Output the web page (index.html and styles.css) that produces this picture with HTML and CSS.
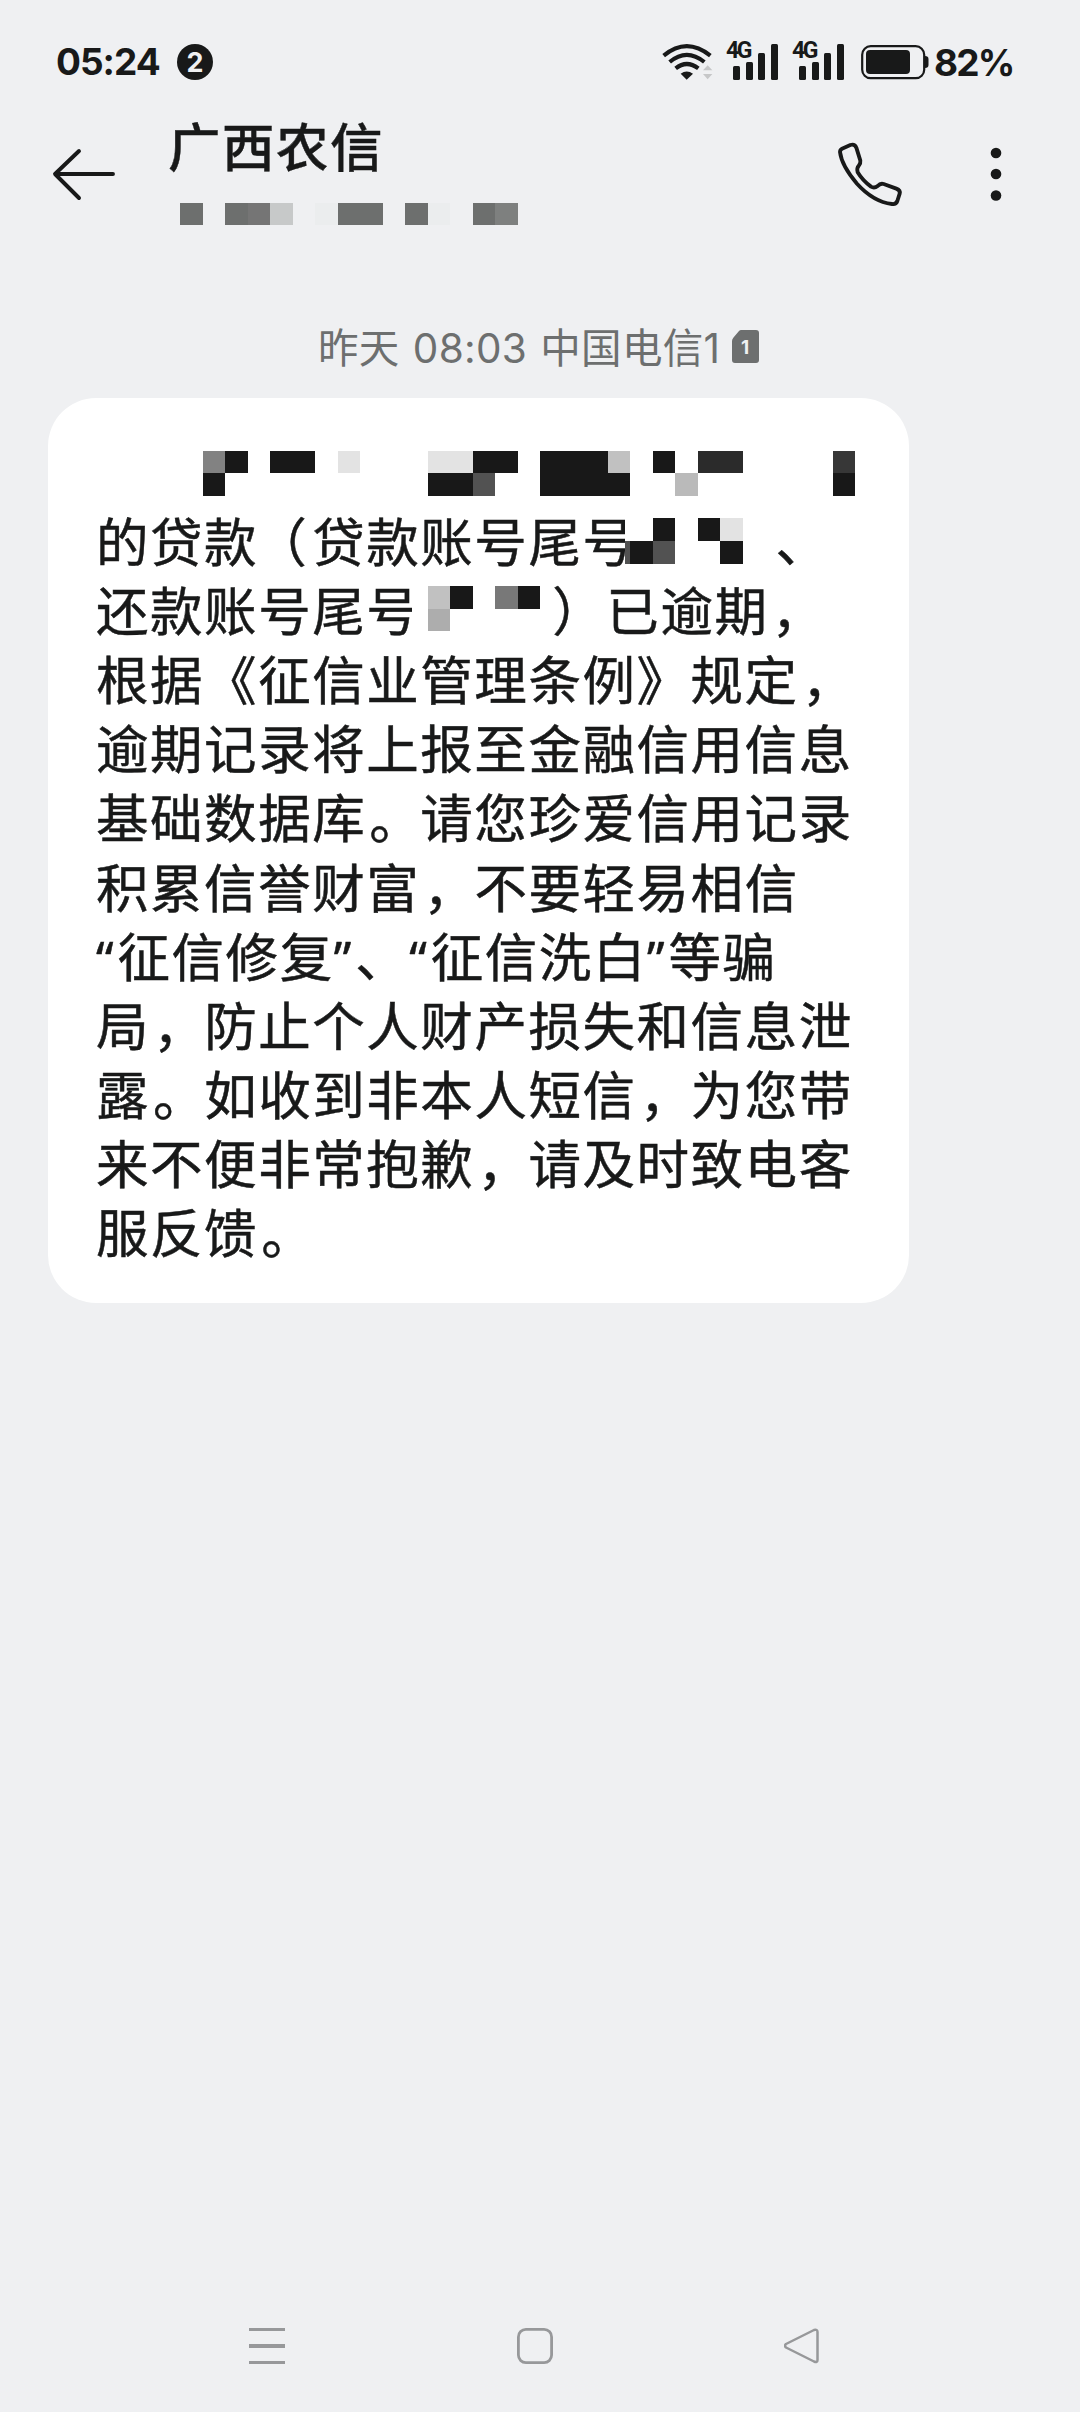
FILE: index.html
```html
<!DOCTYPE html>
<html lang="zh-CN">
<head>
<meta charset="utf-8">
<title>广西农信</title>
<link rel="stylesheet" href="styles.css">
</head>
<body>
<div class="screen">
  <div class="status">
    <span class="time">05:24</span>
    <span class="count">2</span>
    <svg class="wifi" width="52" height="38" viewBox="0 0 156 114" fill="none" stroke="#181919" stroke-width="12.5">
      <path d="M5 38Q74 -19 145 38M23 57Q74 14 127 57M41 76Q74 50 109 76"/>
      <path d="M56 92Q74 79 93 92L74 110Z" fill="#181919" stroke="none"/>
      <path d="M123 82L137 67L151 82ZM123 93L137 109L151 93Z" fill="#c6c7c8" stroke="none"/>
    </svg>
    <div class="signal"><span class="net">4G</span><i class="b1"></i><i class="b2"></i><i class="b3"></i><i class="b4"></i></div>
    <div class="signal second"><span class="net">4G</span><i class="b1"></i><i class="b2"></i><i class="b3"></i><i class="b4"></i></div>
    <svg class="battery" width="68" height="36" viewBox="0 0 68 36">
      <rect x="1.2" y="2.2" width="62" height="32" rx="8.5" fill="none" stroke="#181919" stroke-width="2.2"/>
      <rect x="5" y="6" width="44" height="24" rx="4" fill="#181919"/>
      <path d="M64 12Q67.5 12 67.5 15V21Q67.5 24 64 24Z" fill="#181919"/>
    </svg>
    <span class="percent">82%</span>
  </div>

  <header class="header">
    <svg class="back" width="64" height="54" viewBox="0 0 64 54" fill="none" stroke="#181919" stroke-width="3.9" stroke-linecap="round" stroke-linejoin="round"><path d="M27 4L3 27L27 51M4 27H61"/></svg>
    <div class="contact">
      <h1 class="name">广西农信</h1>
      <svg class="number" width="340" height="23" viewBox="0 0 340 23" shape-rendering="crispEdges">
        <path fill="#6d6f6e" d="M0 0h23v22H0zM45 0h23v22H45zM158 0h45v22h-45zM225 0h23v22h-23zM293 0h22v22h-22z"/>
        <path fill="#757575" d="M68 0h22v22H68z"/><path fill="#c7c9c9" d="M90 0h23v22H90z"/>
        <path fill="#ebedee" d="M135 0h23v22h-23zM248 0h22v22h-22z"/><path fill="#7e807f" d="M315 0h23v22h-23z"/>
      </svg>
    </div>
    <svg class="call" width="67" height="68" viewBox="590 360 201 204" fill="none" stroke="#181919" stroke-width="11.5" stroke-linejoin="round"><path d="M605 386L630 375Q643 371 648 383L660 422Q661 429 656 436Q648 445 652 457Q667 482 692 500Q702 506 712 498Q720 489 730 492L768 506Q781 511 778 521L771 543Q767 554 755 552Q699 545 650 491Q604 437 599 396Q599 389 605 386Z"/></svg>
    <svg class="more" width="12" height="56" viewBox="0 0 12 56" fill="#181919"><circle cx="6" cy="7" r="5.3"/><circle cx="6" cy="28" r="5.3"/><circle cx="6" cy="49.5" r="5.3"/></svg>
  </header>

  <div class="stamp">
    <span class="stamp-text">昨天 08:03 中国电信1</span>
    <svg class="sim" width="27" height="33" viewBox="0 0 27 33"><path d="M9 0H24Q27 0 27 3V30Q27 33 24 33H3Q0 33 0 30V11Q0 9 1.500 7.500L7 1Q8 0 9 0Z" fill="#6d6f6f"/><text x="13" y="24" text-anchor="middle" class="sim-no">1</text></svg>
  </div>

  <div class="bubble">
    <p class="message"><br>的贷款<span class="open">（</span>贷款账号尾号<span class="gap-a"></span>、<br>还款账号尾号<span class="gap-b"></span>）已逾期<span class="comma">，</span><br>根据《征信业管理条例》规定<span class="comma">，</span><br>逾期记录将上报至金融信用信息<br>基础数据库<span class="comma">。</span>请您珍爱信用记录<br>积累信誉财富<span class="comma">，</span>不要轻易相信<br><span class="quote">“</span>征信修复<span class="quote">”</span>、<span class="quote">“</span>征信洗白<span class="quote">”</span>等骗<br>局<span class="comma">，</span>防止个人财产损失和信息泄<br>露<span class="comma">。</span>如收到非本人短信<span class="comma">，</span>为您带<br>来不便非常抱歉<span class="comma">，</span>请及时致电客<br>服反馈<span class="comma">。</span></p>
    <svg class="mask" width="861" height="240" viewBox="48 398 861 240" shape-rendering="crispEdges">
      <path fill="#fff" d="M625 518h118v46H625zM412 586h128v45H412z"/>
      <path fill="#181818" d="M225 451h23v22h-23zM203 473h22v23h-22zM270 451h45v22h-45zM473 451h45v22h-45zM428 473h45v23h-45zM540 451h68v22h22v23h-90zM653 451h22v22h-22zM833 473h22v23h-22z"/>
      <path fill="#181818" d="M653 518h22v23h-22zM698 518h22v23h-22zM630 541h23v23h-23zM720 541h23v23h-23zM450 586h23v23h-23zM518 586h22v23h-22z"/>
      <path fill="#828282" d="M203 451h22v22h-22z"/>
      <path fill="#e3e3e3" d="M338 451h22v22h-22zM428 451h45v22h-45zM720 518h23v23h-23z"/>
      <path fill="#525252" d="M473 473h22v23h-22zM653 541h22v23h-22zM625 541h5v23h-5z"/>
      <path fill="#c1c1c1" d="M608 451h22v22h-22zM428 586h22v23h-22z"/>
      <path fill="#bababa" d="M675 473h23v23h-23z"/>
      <path fill="#2b2b2b" d="M698 451h45v22h-45z"/>
      <path fill="#373737" d="M833 451h22v22h-22z"/>
      <path fill="#adadad" d="M428 609h22v22h-22z"/>
      <path fill="#787878" d="M495 586h23v23h-23z"/>
    </svg>
  </div>

  <nav class="nav">
    <svg width="36" height="36" viewBox="0 0 36 36" fill="#97989a"><path d="M0 0h36v3H0zM0 16h36v4H0zM0 33h36v3H0z"/></svg>
    <svg width="36" height="36" viewBox="0 0 36 36" fill="none" stroke="#97989a" stroke-width="2.8"><rect x="1.400" y="1.400" width="33.200" height="33.200" rx="7.500"/></svg>
    <svg width="36" height="36" viewBox="0 0 36 36" fill="none" stroke="#97989a" stroke-width="2.500" stroke-linejoin="round"><path d="M2 16L30 2Q33.500 1 33.500 4V32Q33.500 35 30 33.500L2 19.500Q0 17.700 2 16Z"/></svg>
  </nav>
</div>
</body>
</html>
```

FILE: styles.css
```css
* { box-sizing: border-box; }
body {
  margin: 0;
  background: #eff0f2;
  color: #181919;
  font-family: Inter, "Noto Sans CJK SC", sans-serif;
}
svg { display: block; flex: none; }
.screen {
  width: 1080px;
  height: 2412px;
  display: flex;
  flex-direction: column;
  overflow: hidden;
}
.status {
  height: 112px;
  padding: 43px 0 0 56px;
  display: flex;
  align-items: flex-start;
  white-space: nowrap;
  flex: none;
}
.time, .percent {
  font-size: 37px;
  line-height: 38px;
  font-weight: 650;
  letter-spacing: -1px;
}
.time { width: 121px; }
.count {
  width: 36px;
  height: 36px;
  margin-top: 1px;
  border-radius: 50%;
  background: #181919;
  color: #eff0f2;
  font-size: 27px;
  line-height: 37px;
  font-weight: 700;
  text-align: center;
}
.wifi { margin: 0 0 0 449px; }
.signal {
  position: relative;
  width: 52px;
  height: 36px;
  margin: 1px 0 0 12px;
  padding-left: 7px;
  display: flex;
  align-items: flex-end;
  gap: 5.5px;
  flex: none;
}
.signal.second { margin-left: 14px; }
.signal i { width: 7.3px; border-radius: 1.5px; background: #181919; }
.b1 { height: 14px; }
.b2 { height: 18px; }
.b3 { height: 27px; }
.b4 { height: 36px; }
.net {
  position: absolute;
  left: 0;
  top: -2px;
  font: 700 23px/18px "Roboto", sans-serif;
  letter-spacing: -2.5px;
}
.battery { margin: 1px 0 0 17px; }
.percent { margin: 1px 0 0 5px; letter-spacing: -1.8px; }
.header {
  height: 203px;
  padding-left: 52px;
  display: flex;
  align-items: flex-start;
  flex: none;
}
.back { margin-top: 35px; }
.contact { width: 400px; margin-left: 52px; }
.name {
  margin: 0;
  padding-top: 2px;
  font-size: 52.5px;
  line-height: 68px;
  font-weight: 500;
  letter-spacing: 1.5px;
  -webkit-text-stroke: 0.4px currentColor;
}
.number { margin: 21px 0 0 12px; }
.call { margin: 28px 0 0 269px; }
.more { margin: 34px 0 0 86px; }
.stamp {
  height: 83px;
  padding-left: 318px;
  display: flex;
  align-items: flex-start;
  color: #6d6f6f;
  flex: none;
}
.stamp-text {
  width: 414px;
  font-size: 40.5px;
  line-height: 67px;
  word-spacing: 1.5px;
  letter-spacing: 0.3px;
  white-space: nowrap;
}
.sim { margin-top: 15px; }
.sim-no { font: 700 19px Inter, sans-serif; fill: #eff0f2; }
.bubble {
  position: relative;
  width: 861px;
  height: 905px;
  margin-left: 48px;
  padding: 42px 0 0 48px;
  border-radius: 48px;
  background: #fff;
  flex: none;
}
.message {
  margin: 0;
  font-size: 52.5px;
  line-height: 69.1px;
  letter-spacing: 1.55px;
  white-space: nowrap;
  -webkit-text-stroke: 0.5px currentColor;
}
.open { position: relative; left: -4px; }
.comma { position: relative; left: 3px; top: 1px; }
.quote {
  display: inline-block;
  width: 21.5px;
  line-height: 1;
  font-family: "Noto Sans", sans-serif;
  font-size: 49px;
  letter-spacing: 0;
}
.gap-a, .gap-b { display: inline-block; }
.gap-a { width: 139px; }
.gap-b { width: 132px; }
.mask { position: absolute; left: 0; top: 0; }
.nav {
  margin-top: auto;
  height: 84px;
  padding: 0 260px 0 249px;
  display: flex;
  justify-content: space-between;
  flex: none;
}
```
